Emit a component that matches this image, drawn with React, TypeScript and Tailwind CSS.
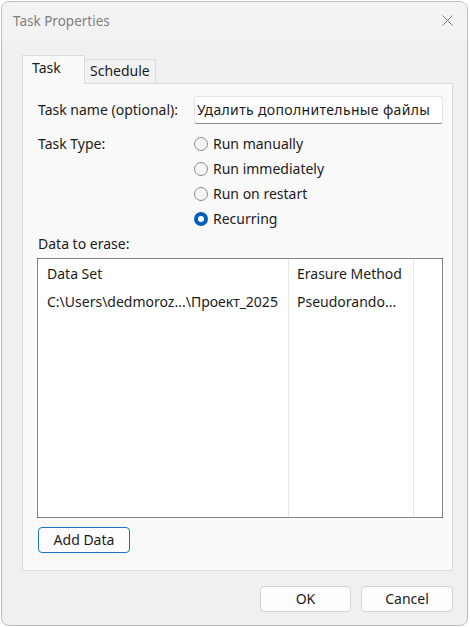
import React from 'react';

const Radio = ({ label, checked }: { label: string; checked?: boolean }) => (
  <label className="flex h-[25px] items-center gap-[5px]">
    {checked ? (
      <span className="flex h-[14px] w-[14px] items-center justify-center rounded-full bg-[#005fb8]">
        <span className="h-[6px] w-[6px] rounded-full bg-white" />
      </span>
    ) : (
      <span className="h-[14px] w-[14px] rounded-full border border-[#8b8b8b] bg-[#f5f5f5]" />
    )}
    <span>{label}</span>
  </label>
);

export default function App() {
  return (
    <div className="min-h-screen bg-white pl-px pt-px font-['Noto_Sans',sans-serif] text-[14px] leading-[18px] text-[#1b1b1b]">
      <div className="flex h-[625px] w-[467px] flex-col overflow-hidden rounded-[8px] border border-[#bdbdbd] bg-[#f0f0f0]">
        {/* title bar */}
        <div className="flex h-[39px] shrink-0 items-center justify-between bg-[#f3f3f3] pb-[2px] pl-[11px] pr-[14px]">
          <span className="text-[13.5px] text-[#7f7f7f]">Task Properties</span>
          <svg width="11" height="11" viewBox="0 0 11 11" className="text-[#7a7a7a]">
            <path d="M0.5 0.5 L10.5 10.5 M10.5 0.5 L0.5 10.5" stroke="currentColor" strokeWidth="1" />
          </svg>
        </div>

        <div className="flex flex-1 flex-col pl-[20px] pr-[14px] pt-[14px]">
          {/* tabs */}
          <div className="flex items-end">
            <div className="relative z-10 -mb-px flex h-[29px] w-[63px] items-center border border-b-0 border-[#dcdcdc] bg-[#f9f9f9] pb-[4px] pl-[9px]">
              Task
            </div>
            <div className="flex h-[24px] w-[71px] items-center border border-l-0 border-b-0 border-[#dcdcdc] bg-[#f2f2f2] pb-[2px] pl-[5px]">
              Schedule
            </div>
          </div>

          {/* panel */}
          <div className="flex h-[488px] w-[431px] flex-col border border-[#dcdcdc] bg-[#f9f9f9] pl-[15px] pr-[9px] pt-[12px]">
            <div className="flex items-center">
              <span className="w-[156px]">Task name (optional):</span>
              <div className="flex h-[28px] flex-1 items-center whitespace-nowrap rounded-[3px] border border-[#e5e5e5] border-b-[#8a8a8a] bg-white pl-[2px] tracking-[0.35px]">
                Удалить дополнительные файлы
              </div>
            </div>

            <div className="mt-[7px] flex">
              <span className="w-[156px] pt-[4px]">Task Type:</span>
              <div className="flex flex-col">
                <Radio label="Run manually" />
                <Radio label="Run immediately" />
                <Radio label="Run on restart" />
                <Radio label="Recurring" checked />
              </div>
            </div>

            <div className="mt-[5px] h-[16px] leading-[16px]">Data to erase:</div>

            <div className="-ml-px mt-[6px] flex h-[260px] w-[406px] border border-[#828282] bg-white">
              <div className="flex w-[251px] flex-col border-r border-[#e8e8e8]">
                <div className="flex h-[30px] items-center pl-[9px]">Data Set</div>
                <div className="flex h-[26px] items-center whitespace-nowrap pl-[9px]">C:\Users\dedmoroz...\Проект_2025</div>
              </div>
              <div className="flex w-[125px] flex-col border-r border-[#e8e8e8]">
                <div className="flex h-[30px] items-center whitespace-nowrap pl-[8px]">Erasure Method</div>
                <div className="flex h-[26px] items-center pl-[8px]">Pseudorando...</div>
              </div>
              <div className="flex-1" />
            </div>

            <div className="mt-[9px]">
              <button className="flex h-[26px] w-[92px] items-center justify-center rounded-[4px] border border-[#1a73c7] bg-[#fdfdfd]">
                Add Data
              </button>
            </div>
          </div>

          {/* footer */}
          <div className="flex justify-end gap-[10px] pt-[15px]">
            <button className="flex h-[26px] w-[91px] items-center justify-center rounded-[4px] border border-[#d3d3d3] bg-[#fdfdfd]">
              OK
            </button>
            <button className="flex h-[26px] w-[92px] items-center justify-center rounded-[4px] border border-[#d3d3d3] bg-[#fdfdfd]">
              Cancel
            </button>
          </div>
        </div>
      </div>
    </div>
  );
}
